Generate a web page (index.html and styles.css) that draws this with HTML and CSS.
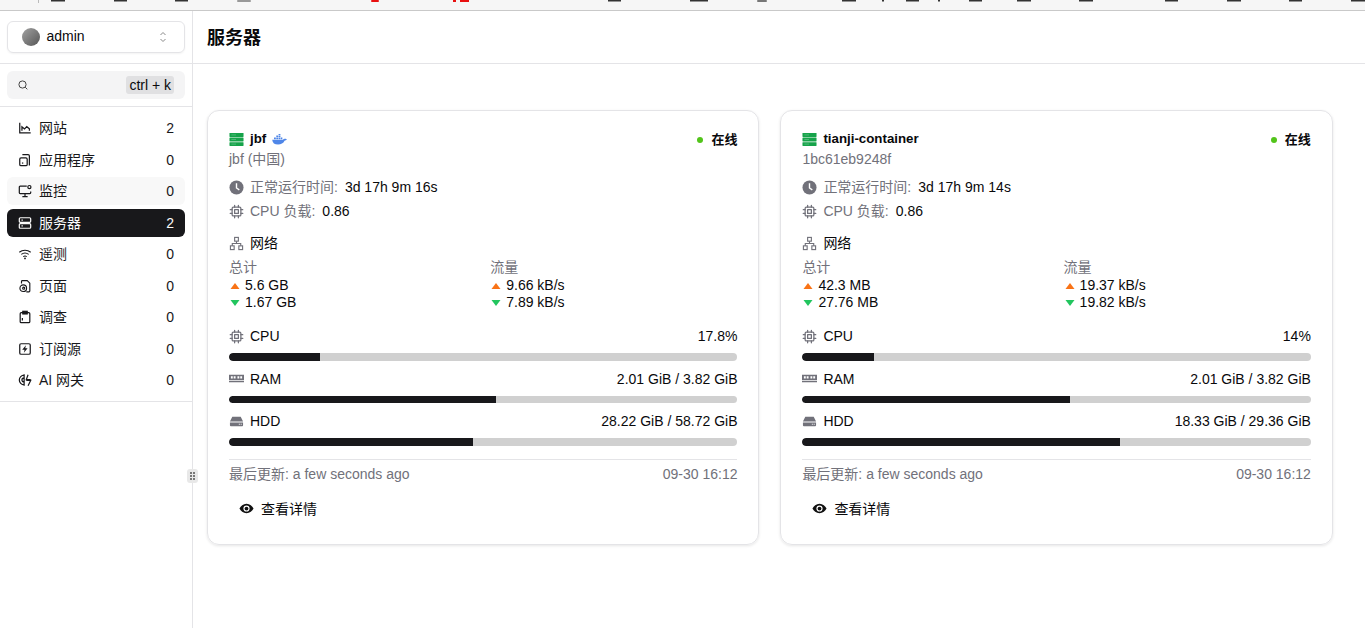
FILE: index.html
```html
<!DOCTYPE html>
<html lang="zh">
<head>
  <meta charset="UTF-8">
  <meta name="viewport" content="width=device-width, initial-scale=1.0">
  <title>服务器</title>
  <link rel="stylesheet" href="styles.css">
</head>
<body>
  <svg class="sprites" width="0" height="0">
    <symbol id="i-chip" viewBox="0 0 24 24"><g fill="none" stroke="currentColor" stroke-width="2" stroke-linecap="round" stroke-linejoin="round"><rect x="5" y="5" width="14" height="14" rx="2"/><rect x="9" y="9" width="6" height="6"/><path d="M9 2v3M15 2v3M9 19v3M15 19v3M2 9h3M2 15h3M19 9h3M19 15h3"/></g></symbol>
    <symbol id="i-server" viewBox="0 0 16 16"><g fill="#16a34a"><rect x="0.500" y="1" width="15" height="4.200" rx=".5"/><rect x="0.500" y="5.900" width="15" height="4.200" rx=".5"/><rect x="0.500" y="10.800" width="15" height="4.200" rx=".5"/></g><g fill="#4dbb77"><rect x="2.500" y="2.600" width="5" height="1"/><rect x="2.500" y="7.500" width="5" height="1"/><rect x="2.500" y="12.400" width="5" height="1"/></g></symbol>
    <symbol id="i-clock" viewBox="0 0 16 16"><circle cx="8" cy="8" r="7.500" fill="#71717a"/><path d="M8 3.500V8.500L11 10.500" fill="none" stroke="#fff" stroke-width="1.500"/></symbol>
    <symbol id="i-net" viewBox="0 0 16 16"><g fill="none" stroke="#71717a" stroke-width="1.200"><rect x="6" y="1.500" width="4" height="4"/><rect x="1.500" y="10.500" width="4" height="4"/><rect x="10.500" y="10.500" width="4" height="4"/><path d="M8 5.500V8M3.500 10.500V8H12.500V10.500"/></g></symbol>
    <symbol id="i-ram" viewBox="0 0 16 16"><path fill="#71717a" d="M0 4h16v5.500H0zM0 10.500h16V12H0z"/><path fill="#fff" d="M2 5.500h2v2.500H2zM5 5.500h2v2.500H5zM9 5.500h2v2.500H9zM12 5.500h2v2.500h-2z"/></symbol>
    <symbol id="i-hdd" viewBox="0 0 16 16"><path fill="#71717a" d="M3.500 3h9L15 8H1zM1 9h14v3a1 1 0 0 1-1 1H2a1 1 0 0 1-1-1z"/><path fill="#fff" d="M10.500 10.500h1v1h-1zM12.500 10.500h1v1h-1z"/></symbol>
    <symbol id="i-eye" viewBox="0 0 16 16"><path fill="#111" d="M8 3C4.500 3 1.800 5.300.5 8c1.300 2.700 4 5 7.500 5s6.200-2.300 7.500-5C14.200 5.300 11.500 3 8 3zm0 8.300A3.300 3.300 0 1 1 8 4.700a3.300 3.300 0 0 1 0 6.600z"/><circle cx="8" cy="8" r="2" fill="#111"/></symbol>
    <symbol id="i-docker" viewBox="0 0 16 12"><path fill="#4f86e8" d="M0 6.200h11.800c.5-1 1.700-1.300 3-.9l1.200.5c-.6 1.100-1.600 1.500-2.500 1.500C12.300 10 9.600 11.500 6.500 11.500 2.500 11.500.4 9.700 0 6.200z"/><path fill="#4f86e8" d="M2 3.800h2v1.800H2zM4.500 3.800h2v1.800h-2zM7 3.800h2v1.800H7zM4.500 1.500h2v1.800h-2zM7 1.500h2v1.800H7zM7-.700h2v1.800H7zM9.500 3.800h1.600v1.800H9.500z"/></symbol>
    <symbol id="i-up" viewBox="0 0 10 8"><path fill="#f97316" d="M5 1l4.500 6H.5z"/></symbol>
    <symbol id="i-down" viewBox="0 0 10 8"><path fill="#22c55e" d="M5 7L.5 1h9z"/></symbol>
  </svg>

  <!-- browser bookmarks bar, only its lower edge shows -->
  <svg class="top-strip" width="1365" height="10" viewBox="0 0 1365 10">
    <g fill="#333">
      <rect x="51" y="0" width="14" height="1.500"/><rect x="114" y="0" width="13" height="1.500"/><rect x="175" y="0" width="13" height="1.500"/>
      <rect x="608" y="0" width="13" height="1.500"/><rect x="690" y="0" width="18" height="1.500"/><rect x="842" y="0" width="14" height="1.500"/>
      <rect x="882" y="0" width="2" height="1.500"/><rect x="906" y="0" width="13" height="1.500"/><rect x="938" y="0" width="2" height="1.500"/>
      <rect x="969" y="0" width="13" height="1.500"/><rect x="1017" y="0" width="14" height="1.500"/><rect x="1079" y="0" width="14" height="1.500"/>
      <rect x="1165" y="0" width="13" height="1.500"/><rect x="1227" y="0" width="14" height="1.500"/><rect x="1289" y="0" width="13" height="1.500"/><rect x="1351" y="0" width="14" height="1.500"/>
    </g>
    <rect x="38" y="0" width="1" height="3" fill="#bbb"/>
    <rect x="237" y="0" width="14" height="2" rx="1" fill="#999"/>
    <rect x="757" y="0" width="10" height="2" rx="1" fill="#777"/>
    <rect x="371" y="0" width="8" height="2" rx="1" fill="#e81010"/>
    <rect x="453" y="0" width="3" height="2" fill="#e81010"/><rect x="460" y="0" width="9" height="2" fill="#e81010"/>
  </svg>

  <div class="app">
    <aside class="sidebar">
      <div class="side-top">
        <div class="user-select">
          <span class="avatar"></span>
          <span class="user-name">admin</span>
          <svg class="chevrons" width="10" height="12" viewBox="0 0 10 12"><path d="M2.500 4L5 1.500 7.500 4M2.500 8L5 10.500 7.500 8" fill="none" stroke="#8a8a8a" stroke-width="1"/></svg>
        </div>
      </div>
      <div class="side-search">
        <div class="search-box">
          <svg width="12" height="12" viewBox="0 0 12 12"><circle cx="5.500" cy="5.500" r="3.600" fill="none" stroke="#444" stroke-width="1"/><path d="M8.200 8.200L10.300 10.300" stroke="#444" stroke-width="1"/></svg>
          <kbd class="shortcut">ctrl + k</kbd>
        </div>
      </div>
      <nav class="nav">
        <a class="nav-item">
          <svg class="nav-icon" viewBox="0 0 16 16"><path d="M2 2v11.500h12.500M4.500 11V6.500L7.500 9l2.500-2.500 3 2.500V11" fill="none" stroke="currentColor" stroke-width="1.400"/></svg>
          <span class="nav-label">网站</span><span>2</span>
        </a>
        <a class="nav-item">
          <svg class="nav-icon" viewBox="0 0 16 16"><g fill="none" stroke="currentColor" stroke-width="1.400"><rect x="2" y="5.500" width="8.500" height="9" rx="1.500"/><path d="M5 1.800h6.500A1.500 1.500 0 0 1 13 3.300v11"/><path d="M4.500 11.500h1.500"/></g></svg>
          <span class="nav-label">应用程序</span><span>0</span>
        </a>
        <a class="nav-item hovered">
          <svg class="nav-icon" viewBox="0 0 16 16"><g fill="none" stroke="currentColor" stroke-width="1.400"><path d="M10 2.500H2.500a1 1 0 0 0-1 1V10a1 1 0 0 0 1 1h11a1 1 0 0 0 1-1V8.500M8 11v3M5 14.500h6"/><circle cx="13" cy="3.500" r="1.800"/></g></svg>
          <span class="nav-label">监控</span><span>0</span>
        </a>
        <a class="nav-item active">
          <svg class="nav-icon" viewBox="0 0 16 16"><g fill="none" stroke="currentColor" stroke-width="1.400"><rect x="1.500" y="2" width="13" height="5.200" rx="1.200"/><rect x="1.500" y="8.800" width="13" height="5.200" rx="1.200"/><path d="M4 4.600h1.500M4 11.400h1.500"/></g></svg>
          <span class="nav-label">服务器</span><span>2</span>
        </a>
        <a class="nav-item">
          <svg class="nav-icon" viewBox="0 0 16 16"><g fill="none" stroke="currentColor" stroke-width="1.200"><path d="M1.500 6c3.700-3.200 9.300-3.200 13 0M3.800 8.500c2.500-2 5.900-2 8.400 0M6 11c1.200-.8 2.800-.8 4 0"/></g><circle cx="8" cy="13" r="1" fill="currentColor"/></svg>
          <span class="nav-label">遥测</span><span>0</span>
        </a>
        <a class="nav-item">
          <svg class="nav-icon" viewBox="0 0 16 16"><g fill="none" stroke="currentColor" stroke-width="1.300"><path d="M4 5V2.800a1 1 0 0 1 1-1h5.500l3 3v8.900a1 1 0 0 1-1 1H9.500"/><circle cx="6" cy="10.500" r="3.800"/><circle cx="6.500" cy="10.500" r="1.200"/></g></svg>
          <span class="nav-label">页面</span><span>0</span>
        </a>
        <a class="nav-item">
          <svg class="nav-icon" viewBox="0 0 16 16"><g fill="none" stroke="currentColor" stroke-width="1.400"><rect x="2.500" y="3" width="11" height="11.500" rx="1.200"/><rect x="5.500" y="1.500" width="5" height="3" fill="currentColor"/><path d="M5 9v3"/></g></svg>
          <span class="nav-label">调查</span><span>0</span>
        </a>
        <a class="nav-item">
          <svg class="nav-icon" viewBox="0 0 16 16"><rect x="2" y="2" width="12" height="12" rx="1.500" fill="none" stroke="currentColor" stroke-width="1.400"/><path d="M9 3.800L4.800 8.800h2.700l-.8 3.400 4.300-5H8.300z" fill="currentColor"/></svg>
          <span class="nav-label">订阅源</span><span>0</span>
        </a>
        <a class="nav-item">
          <svg class="nav-icon" viewBox="0 0 16 16"><g fill="none" stroke="currentColor" stroke-width="1.400"><path d="M7 2.500a5.500 5.500 0 1 0 0 11M7 5.500a2.500 2.500 0 1 0 0 5M7 1.500v13M11.500 2l-2 5.500h5M9.500 8.500h5l-3 6"/></g></svg>
          <span class="nav-label">AI 网关</span><span>0</span>
        </a>
      </nav>
      <div class="resize-handle"><span></span><span></span><span></span><span></span><span></span><span></span></div>
    </aside>

    <main class="main">
      <header class="page-head"><h1>服务器</h1></header>
      <div class="cards">

        <section class="card">
          <div class="card-head">
            <svg class="ic-15"><use href="#i-server"/></svg>
            <strong class="server-name">jbf</strong>
            <svg class="docker" width="15" height="11"><use href="#i-docker"/></svg>
            <span class="status"><i class="dot"></i>在线</span>
          </div>
          <div class="sub">jbf (中国)</div>
          <div class="info first">
            <svg class="ic-15"><use href="#i-clock"/></svg>
            <span class="muted">正常运行时间:</span><span>3d 17h 9m 16s</span>
          </div>
          <div class="info">
            <svg class="ic-15 chip"><use href="#i-chip"/></svg>
            <span class="muted">CPU 负载:</span><span>0.86</span>
          </div>
          <div class="net-title"><svg class="ic-15"><use href="#i-net"/></svg><span>网络</span></div>
          <div class="net-grid">
            <div>
              <div class="muted net-label">总计</div>
              <div class="net-line"><svg class="arrow"><use href="#i-up"/></svg>5.6 GB</div>
              <div class="net-line"><svg class="arrow"><use href="#i-down"/></svg>1.67 GB</div>
            </div>
            <div>
              <div class="muted net-label">流量</div>
              <div class="net-line"><svg class="arrow"><use href="#i-up"/></svg>9.66 kB/s</div>
              <div class="net-line"><svg class="arrow"><use href="#i-down"/></svg>7.89 kB/s</div>
            </div>
          </div>
          <div class="metric cpu">
            <div class="metric-row"><svg class="ic-15 chip"><use href="#i-chip"/></svg><span class="metric-name">CPU</span><span>17.8%</span></div>
            <div class="bar"><div class="bar-fill" style="width: 17.8%"></div></div>
          </div>
          <div class="metric">
            <div class="metric-row"><svg class="ic-15"><use href="#i-ram"/></svg><span class="metric-name">RAM</span><span>2.01 GiB / 3.82 GiB</span></div>
            <div class="bar"><div class="bar-fill" style="width: 52.6%"></div></div>
          </div>
          <div class="metric">
            <div class="metric-row"><svg class="ic-15"><use href="#i-hdd"/></svg><span class="metric-name">HDD</span><span>28.22 GiB / 58.72 GiB</span></div>
            <div class="bar"><div class="bar-fill" style="width: 48.06%"></div></div>
          </div>
          <div class="card-foot"><span>最后更新: a few seconds ago</span><span>09-30 16:12</span></div>
          <button class="detail-btn"><svg class="ic-15"><use href="#i-eye"/></svg>查看详情</button>
        </section>

        <section class="card">
          <div class="card-head">
            <svg class="ic-15"><use href="#i-server"/></svg>
            <strong class="server-name">tianji-container</strong>
            <span class="status"><i class="dot"></i>在线</span>
          </div>
          <div class="sub">1bc61eb9248f</div>
          <div class="info first">
            <svg class="ic-15"><use href="#i-clock"/></svg>
            <span class="muted">正常运行时间:</span><span>3d 17h 9m 14s</span>
          </div>
          <div class="info">
            <svg class="ic-15 chip"><use href="#i-chip"/></svg>
            <span class="muted">CPU 负载:</span><span>0.86</span>
          </div>
          <div class="net-title"><svg class="ic-15"><use href="#i-net"/></svg><span>网络</span></div>
          <div class="net-grid">
            <div>
              <div class="muted net-label">总计</div>
              <div class="net-line"><svg class="arrow"><use href="#i-up"/></svg>42.3 MB</div>
              <div class="net-line"><svg class="arrow"><use href="#i-down"/></svg>27.76 MB</div>
            </div>
            <div>
              <div class="muted net-label">流量</div>
              <div class="net-line"><svg class="arrow"><use href="#i-up"/></svg>19.37 kB/s</div>
              <div class="net-line"><svg class="arrow"><use href="#i-down"/></svg>19.82 kB/s</div>
            </div>
          </div>
          <div class="metric cpu">
            <div class="metric-row"><svg class="ic-15 chip"><use href="#i-chip"/></svg><span class="metric-name">CPU</span><span>14%</span></div>
            <div class="bar"><div class="bar-fill" style="width: 14%"></div></div>
          </div>
          <div class="metric">
            <div class="metric-row"><svg class="ic-15"><use href="#i-ram"/></svg><span class="metric-name">RAM</span><span>2.01 GiB / 3.82 GiB</span></div>
            <div class="bar"><div class="bar-fill" style="width: 52.6%"></div></div>
          </div>
          <div class="metric">
            <div class="metric-row"><svg class="ic-15"><use href="#i-hdd"/></svg><span class="metric-name">HDD</span><span>18.33 GiB / 29.36 GiB</span></div>
            <div class="bar"><div class="bar-fill" style="width: 62.43%"></div></div>
          </div>
          <div class="card-foot"><span>最后更新: a few seconds ago</span><span>09-30 16:12</span></div>
          <button class="detail-btn"><svg class="ic-15"><use href="#i-eye"/></svg>查看详情</button>
        </section>

      </div>
    </main>
  </div>
</body>
</html>
```

FILE: styles.css
```css
* {
  box-sizing: border-box;
}
html, body {
  height: 100%;
}
body {
  margin: 0;
  overflow: hidden;
  background: #fff;
  color: #09090b;
  font-family: "Liberation Sans", "Noto Sans CJK SC", sans-serif;
  font-size: 14px;
  line-height: 20px;
}
.sprites {
  position: absolute;
}
.top-strip {
  display: block;
  background: #f6f6f6;
}
.app {
  display: flex;
  height: 618px;
  border-top: 1px solid #c9c9c9;
}

/* sidebar */
.sidebar {
  position: relative;
  width: 193px;
  flex: none;
  border-right: 1px solid #e4e4e7;
}
.side-top {
  height: 53px;
  padding: 10px 7px 0;
  border-bottom: 1px solid #e4e4e7;
}
.user-select {
  display: flex;
  align-items: center;
  height: 32px;
  padding: 0 16px 0 14px;
  border: 1px solid #e4e4e7;
  border-radius: 6px;
  box-shadow: 0 1px 2px rgba(0, 0, 0, 0.05);
}
.avatar {
  width: 18px;
  height: 18px;
  border-radius: 50%;
  background: linear-gradient(135deg, #a3a3a3, #555);
}
.user-name {
  flex: 1;
  margin: 0 0 2px 6.500px;
}
.side-search {
  height: 43px;
  padding: 7px 7px 0;
  border-bottom: 1px solid #e4e4e7;
}
.search-box {
  display: flex;
  align-items: center;
  justify-content: space-between;
  height: 28px;
  padding: 0 11px 0 10px;
  background: #f4f4f5;
  border-radius: 6px;
}
.shortcut {
  padding: 0 3px;
  background: #e0e0e2;
  border-radius: 3px;
  font-family: inherit;
  font-size: 14px;
  line-height: 18px;
}
.nav {
  display: flex;
  flex-direction: column;
  gap: 3.500px;
  height: 295px;
  padding: 7px 7px 0;
  border-bottom: 1px solid #e4e4e7;
}
.nav-item {
  display: flex;
  align-items: center;
  flex: none;
  height: 28px;
  padding: 0 11px;
  border-radius: 6px;
  color: #18181b;
}
.nav-item.hovered {
  background: #f8f8f8;
}
.nav-item.active {
  background: #18181b;
  color: #fafafa;
}
.nav-icon {
  width: 14px;
  height: 14px;
  margin-right: 7px;
  flex: none;
}
.nav-label {
  flex: 1;
}
.resize-handle {
  position: absolute;
  top: 458px;
  left: 187px;
  display: grid;
  grid-template-columns: 2px 2px;
  gap: 1px;
  align-content: center;
  justify-content: center;
  width: 11px;
  height: 14px;
  background: #e8e8e8;
  border-radius: 3px;
}
.resize-handle span {
  width: 2px;
  height: 2px;
  background: #777;
}

/* main */
.main {
  flex: 1;
  min-width: 0;
}
.page-head {
  display: flex;
  align-items: center;
  height: 53px;
  padding: 2px 14px 0;
  border-bottom: 1px solid #e4e4e7;
}
.page-head h1 {
  margin: 0;
  font-size: 18px;
  font-weight: 700;
}
.cards {
  display: flex;
  gap: 20.900px;
  padding: 46px 14px 0;
}
.card {
  width: 552.490px;
  height: 435px;
  padding: 18px 21px 0;
  border: 1px solid #e4e4e7;
  border-radius: 12px;
  box-shadow: 0 1px 3px rgba(0, 0, 0, 0.1);
}
.card-head {
  display: flex;
  align-items: center;
  height: 20px;
}
.ic-15 {
  width: 15px;
  height: 15px;
  flex: none;
}
.chip {
  color: #71717a;
}
.server-name {
  margin-left: 6px;
  font-size: 13.300px;
  font-weight: 700;
}
.docker {
  margin-left: 6px;
}
.status {
  display: flex;
  align-items: center;
  margin: 2px 0 0 auto;
  font-weight: 700;
  font-size: 13px;
}
.dot {
  width: 6px;
  height: 6px;
  margin-right: 8px;
  border-radius: 50%;
  background: #52c41a;
}
.sub {
  color: #71717a;
}
.muted {
  color: #71717a;
}
.info {
  display: flex;
  align-items: center;
  gap: 6px;
  height: 24px;
}
.info .muted {
  margin-right: 1px;
}
.info.first {
  margin-top: 6px;
}
.net-title {
  display: flex;
  align-items: center;
  gap: 6px;
  margin-top: 10px;
  height: 20px;
}
.net-grid {
  display: grid;
  grid-template-columns: 1fr 1fr;
  gap: 14px;
  margin-top: 4px;
}
.net-label {
  height: 20px;
}
.net-line {
  display: flex;
  align-items: center;
  height: 17px;
  line-height: 17px;
}
.arrow {
  width: 10px;
  height: 8px;
  margin: 0 5px 0 1px;
  flex: none;
}
.metric {
  margin-top: 8px;
}
.metric.cpu {
  margin-top: 15px;
}
.metric-row {
  display: flex;
  align-items: center;
  gap: 6px;
  height: 20px;
}
.metric-name {
  flex: 1;
}
.bar {
  height: 7.500px;
  margin-top: 7px;
  background: #d0d0d0;
  border-radius: 4px;
  overflow: hidden;
}
.bar-fill {
  height: 100%;
  background: #18181b;
  border-radius: 4px 0 0 4px;
}
.card-foot {
  display: flex;
  justify-content: space-between;
  margin-top: 13px;
  padding-top: 4px;
  border-top: 1px solid #e4e4e7;
  color: #71717a;
}
.detail-btn {
  display: flex;
  align-items: center;
  gap: 7px;
  height: 32px;
  margin-top: 9px;
  padding: 0 10px;
  background: none;
  border: 0;
  color: #09090b;
  font: inherit;
}
```
